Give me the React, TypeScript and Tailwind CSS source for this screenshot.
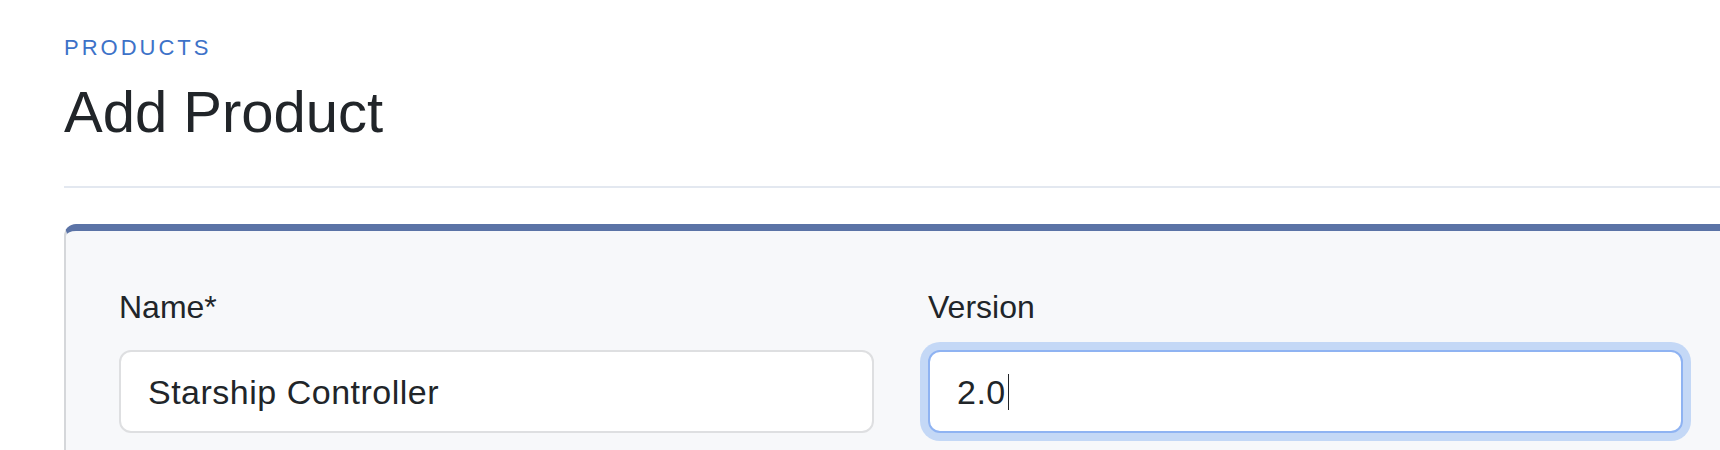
const font = { fontFamily: '"Liberation Sans", Arial, sans-serif' };

const Field = ({ label, value, focused }: { label: string; value: string; focused?: boolean }) => (
  <div className="flex flex-col">
    <label className="text-[32px] leading-[40px] text-[#212529]">{label}</label>
    <div
      className={
        focused
          ? 'mt-[23px] flex h-[83px] items-center rounded-xl border-2 border-[#8fb3f2] bg-white px-[27px] shadow-[0_0_0_8px_#c4d8f6]'
          : 'mt-[23px] flex h-[83px] items-center rounded-xl border-2 border-[#dedfe1] bg-white px-[27px]'
      }
    >
      <span className="text-[34px] leading-none tracking-[0.5px] text-[#212529]">{value}</span>
      {focused && <span className="ml-[2px] h-[36px] w-px bg-[#212529]" />}
    </div>
  </div>
);

export default function App() {
  return (
    <div className="h-[450px] overflow-hidden bg-white" style={font}>
      <div className="pl-[64px] pt-[36px]">
        <div className="text-[22px] leading-[24px] tracking-[3px] text-[#3d72c8]">PRODUCTS</div>
        <h1 className="mt-5 text-[58px] leading-[64px] text-[#212529]">Add Product</h1>
        <div className="mt-[42px] h-[2px] bg-[#e3e8f0]" />

        {/* Form card */}
        <div className="mt-[36px] w-[1674px] shrink-0 rounded-t-xl border-x-2 border-t-[7px] border-x-[#d5d7da] border-t-[#5b73a6] bg-[#f7f8fa] px-[53px] pb-10 pt-[56px]">
          <div className="grid grid-cols-2 gap-[54px]">
            <Field label="Name*" value="Starship Controller" />
            <Field label="Version" value="2.0" focused />
          </div>
        </div>
      </div>
    </div>
  );
}
